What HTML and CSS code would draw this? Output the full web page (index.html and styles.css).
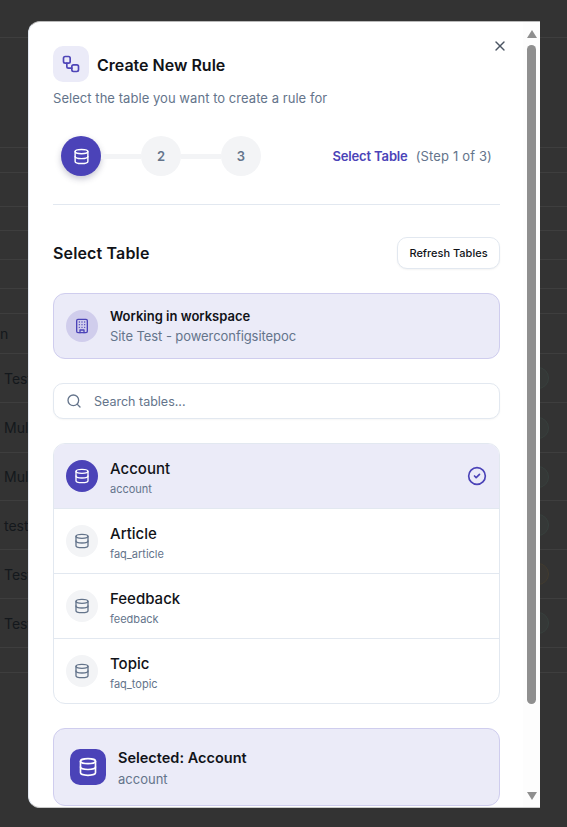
FILE: index.html
```html
<!DOCTYPE html>
<html>

<head>
    <meta charset="utf-8">
    <title>Create New Rule</title>
    <link rel="stylesheet" href="styles.css">
</head>

<body>
    <svg class="defs" width="0" height="0">
        <symbol id="db" viewBox="0 0 24 24">
            <ellipse cx="12" cy="5" rx="9" ry="3"></ellipse>
            <path d="M3 5V19A9 3 0 0 0 21 19V5"></path>
            <path d="M3 12A9 3 0 0 0 21 12"></path>
        </symbol>
    </svg>

    <!-- dimmed page behind the dialog -->
    <div class="backdrop">
        <div class="bg-row"></div>
        <div class="bg-row"></div>
        <div class="bg-row"></div>
        <div class="bg-row"></div>
        <div class="bg-row"></div>
        <div class="bg-row"></div>
        <div class="bg-row"></div>
        <div class="bg-row"></div>
        <div class="bg-row"><span class="bg-head">n</span></div>
        <div class="bg-row"><span>Test</span><i class="dot"></i></div>
        <div class="bg-row"><span>Multi</span><i class="dot"></i></div>
        <div class="bg-row"><span>Multi</span><i class="dot"></i></div>
        <div class="bg-row"><span>test</span><i class="dot"></i></div>
        <div class="bg-row"><span>Test</span><i class="dot amber"></i></div>
        <div class="bg-row"><span>Test</span><i class="dot"></i></div>
        <div class="bg-row"></div>
    </div>

    <div class="modal">
        <div class="modal-body">
            <button class="close">
                <svg viewBox="0 0 24 24" class="ico">
                    <path d="M18 6 6 18"></path>
                    <path d="m6 6 12 12"></path>
                </svg>
            </button>

            <div class="title-row">
                <div class="title-icon">
                    <svg viewBox="0 0 24 24" class="ico">
                        <rect width="8" height="8" x="3" y="3" rx="2"></rect>
                        <path d="M7 11v4a2 2 0 0 0 2 2h4"></path>
                        <rect width="8" height="8" x="13" y="13" rx="2"></rect>
                    </svg>
                </div>
                <h1>Create New Rule</h1>
            </div>
            <p class="subtitle">Select the table you want to create a rule for</p>

            <div class="stepper">
                <div class="steps">
                    <div class="step active"><svg class="ico"><use href="#db"></use></svg></div>
                    <div class="link"></div>
                    <div class="step">2</div>
                    <div class="link"></div>
                    <div class="step">3</div>
                </div>
                <div class="step-label"><b>Select Table</b><span>(Step 1 of 3)</span></div>
            </div>

            <div class="section-head">
                <h2>Select Table</h2>
                <button class="refresh">Refresh Tables</button>
            </div>

            <div class="workspace">
                <div class="circle soft">
                    <svg viewBox="0 0 24 24" class="ico">
                        <rect width="16" height="20" x="4" y="2" rx="2"></rect>
                        <path d="M9 22v-4h6v4"></path>
                        <path d="M8 6h.01M12 6h.01M16 6h.01M8 10h.01M12 10h.01M16 10h.01M8 14h.01M12 14h.01M16 14h.01"></path>
                    </svg>
                </div>
                <div>
                    <div class="ws-title">Working in workspace</div>
                    <div class="ws-sub">Site Test - powerconfigsitepoc</div>
                </div>
            </div>

            <div class="search">
                <svg viewBox="0 0 24 24" class="ico">
                    <circle cx="11" cy="11" r="8"></circle>
                    <path d="m21 21-4.3-4.3"></path>
                </svg>
                <span>Search tables...</span>
            </div>

            <div class="tables">
                <div class="table-row selected">
                    <div class="circle"><svg class="ico"><use href="#db"></use></svg></div>
                    <div class="table-text">
                        <div class="table-name">Account</div>
                        <div class="table-key">account</div>
                    </div>
                    <svg viewBox="0 0 24 24" class="ico check">
                        <circle cx="12" cy="12" r="10"></circle>
                        <path d="m9 12 2 2 4-4"></path>
                    </svg>
                </div>
                <div class="table-row">
                    <div class="circle"><svg class="ico"><use href="#db"></use></svg></div>
                    <div class="table-text">
                        <div class="table-name">Article</div>
                        <div class="table-key">faq_article</div>
                    </div>
                </div>
                <div class="table-row">
                    <div class="circle"><svg class="ico"><use href="#db"></use></svg></div>
                    <div class="table-text">
                        <div class="table-name">Feedback</div>
                        <div class="table-key">feedback</div>
                    </div>
                </div>
                <div class="table-row">
                    <div class="circle"><svg class="ico"><use href="#db"></use></svg></div>
                    <div class="table-text">
                        <div class="table-name">Topic</div>
                        <div class="table-key">faq_topic</div>
                    </div>
                </div>
            </div>

            <div class="selected-card">
                <div class="selected-icon"><svg class="ico"><use href="#db"></use></svg></div>
                <div>
                    <div class="selected-title">Selected: Account</div>
                    <div class="selected-key">account</div>
                </div>
            </div>
        </div>

        <div class="scrollbar">
            <div class="arrow up"></div>
            <div class="thumb"></div>
            <div class="arrow down"></div>
        </div>
    </div>
</body>

</html>
```

FILE: styles.css
```css
* {
    box-sizing: border-box;
}

html,
body {
    margin: 0;
    height: 827px;
    overflow: hidden;
    background: #333333;
    font-family: Inter, "Liberation Sans", sans-serif;
    color: #111318;
}

.defs {
    position: absolute;
}

.ico {
    fill: none;
    stroke: currentColor;
    stroke-width: 2;
    stroke-linecap: round;
    stroke-linejoin: round;
    display: block;
}

/* page behind the dialog */
.backdrop {
    display: grid;
    grid-template-rows: 38px 110px 25px 34px 24px 29px 29px 25px 40px 49px 50px 48px 49px 49px 49px 25px;
}

.bg-row {
    display: flex;
    align-items: center;
    justify-content: space-between;
    padding: 0 18px 0 4px;
    border-bottom: 1px solid #3e3e3e;
    font-size: 14px;
    color: #14181c;
}

.bg-head {
    margin-left: -4px;
}

.dot {
    width: 22px;
    height: 22px;
    border-radius: 50%;
    background: #353837;
    border: 1px solid #37403d;
}

.dot.amber {
    background: #383633;
    border-color: #423b2f;
}

/* dialog */
.modal {
    position: absolute;
    left: 28px;
    top: 21px;
    width: 512px;
    height: 787px;
    display: flex;
    background: #fff;
    border-radius: 12px 0 0 12px;
    border: 1px solid #e2e8f0;
    border-right: 0;
    border-top-color: #b9b9b9;
    border-bottom-color: #c9c9c9;
    overflow: hidden;
}

.modal-body {
    position: relative;
    flex: 1;
    padding: 24px 23px 0 24px;
    overflow: hidden;
}

.close {
    position: absolute;
    top: 16px;
    right: 15px;
    width: 16px;
    height: 16px;
    padding: 0;
    border: 0;
    background: none;
    color: #4b5563;
}

.title-row {
    display: flex;
    align-items: center;
    gap: 8px;
}

.title-icon {
    width: 36px;
    height: 36px;
    border-radius: 10px;
    background: #ebebf8;
    color: #4f46b8;
    display: flex;
    align-items: center;
    justify-content: center;
}

.title-icon .ico {
    width: 20px;
    height: 20px;
}

h1 {
    margin: 0;
    padding-top: 2px;
    font-size: 16px;
    font-weight: 600;
    line-height: 24px;
}

.subtitle {
    margin: 6px 0 0;
    font-size: 13px;
    line-height: 20px;
    letter-spacing: 0.05px;
    color: #64748b;
}

.stepper {
    display: flex;
    align-items: center;
    justify-content: space-between;
    margin-top: 28px;
    padding: 0 8px 28px;
    border-bottom: 1px solid #e2e8f0;
}

.steps {
    display: flex;
    align-items: center;
}

.step {
    width: 40px;
    height: 40px;
    border-radius: 50%;
    background: #f3f4f6;
    color: #64748b;
    font-size: 13px;
    font-weight: 600;
    display: flex;
    align-items: center;
    justify-content: center;
}

.step.active {
    background: #4b43b8;
    color: #fff;
    box-shadow: 0 3px 6px rgba(40, 40, 80, 0.25);
}

.step .ico {
    width: 17px;
    height: 17px;
}

.link {
    width: 40px;
    height: 5px;
    background: #f3f4f6;
}

.step-label {
    font-size: 13px;
    color: #64748b;
    display: flex;
    gap: 8px;
    letter-spacing: 0.15px;
}

.step-label b {
    font-weight: 600;
    letter-spacing: -0.15px;
    color: #4b43b8;
}

.section-head {
    display: flex;
    align-items: center;
    justify-content: space-between;
    margin-top: 32px;
}

h2 {
    margin: 0;
    font-size: 16px;
    font-weight: 600;
    letter-spacing: 0.15px;
}

.refresh {
    width: 103px;
    height: 32px;
    padding: 0;
    border: 1px solid #e2e8f0;
    border-radius: 10px;
    background: #fff;
    box-shadow: 0 1px 2px rgba(0, 0, 0, 0.05);
    font: 500 11px Inter, sans-serif;
    color: #111318;
}

.workspace {
    display: flex;
    align-items: center;
    gap: 12px;
    height: 66px;
    margin-top: 24px;
    padding: 0 12px;
    background: #ebebf8;
    border: 1px solid #cfcdee;
    border-radius: 12px;
}

.circle {
    width: 32px;
    height: 32px;
    flex: none;
    border-radius: 50%;
    background: #f3f4f6;
    color: #64748b;
    display: flex;
    align-items: center;
    justify-content: center;
}

.circle .ico {
    width: 16px;
    height: 16px;
}

.circle.soft {
    background: #d0cdec;
    color: #4b43b8;
}

.ws-title {
    font-size: 13px;
    font-weight: 600;
    line-height: 20px;
}

.ws-sub {
    font-size: 13px;
    line-height: 20px;
    letter-spacing: -0.07px;
    color: #64748b;
}

.search {
    display: flex;
    align-items: center;
    gap: 12px;
    height: 36px;
    margin-top: 24px;
    padding: 0 12px;
    background: #fff;
    border: 1px solid #e2e8f0;
    border-radius: 10px;
    box-shadow: 0 1px 2px rgba(0, 0, 0, 0.04);
    font-size: 12.5px;
    color: #64748b;
}

.search .ico {
    width: 16px;
    height: 16px;
}

.tables {
    margin-top: 24px;
    border: 1px solid #e2e8f0;
    border-radius: 12px;
    overflow: hidden;
}

.table-row {
    display: flex;
    align-items: center;
    gap: 12px;
    height: 65px;
    padding: 0 12px;
    border-bottom: 1px solid #e2e8f0;
}

.table-row:last-child {
    height: 64px;
    border-bottom: 0;
}

.table-row.selected {
    background: #ebebf8;
}

.selected .circle {
    background: #4b43b8;
    color: #fff;
}

.table-text {
    flex: 1;
    padding-top: 2px;
}

.table-name {
    font-size: 15px;
    font-weight: 500;
    line-height: 24px;
}

.table-key {
    font-size: 11px;
    line-height: 16px;
    color: #64748b;
}

.check {
    width: 20px;
    height: 20px;
    stroke-width: 2;
    color: #4b43b8;
}

.selected-card {
    display: flex;
    align-items: center;
    gap: 12px;
    height: 78px;
    margin-top: 24px;
    padding: 0 16px;
    background: #ebebf8;
    border: 1px solid #cfcdee;
    border-radius: 12px;
}

.selected-icon {
    width: 36px;
    height: 36px;
    border-radius: 10px;
    background: #4b43b8;
    color: #fff;
    display: flex;
    align-items: center;
    justify-content: center;
}

.selected-icon .ico {
    width: 20px;
    height: 20px;
}

.selected-title {
    font-size: 14.5px;
    font-weight: 600;
    line-height: 25px;
}

.selected-key {
    font-size: 13px;
    line-height: 19px;
    color: #64748b;
}

/* fake classic scrollbar */
.scrollbar {
    width: 17px;
    flex: none;
    display: flex;
    flex-direction: column;
    align-items: center;
    background: #fdfdfd;
    padding: 8px 0 7px;
}

.thumb {
    width: 9px;
    height: 659px;
    margin: 7px 0 auto;
    border-radius: 5px;
    background: #8f8f8f;
}

.arrow {
    width: 0;
    height: 0;
    border-left: 5px solid transparent;
    border-right: 5px solid transparent;
}

.arrow.up {
    border-bottom: 8px solid #8f8f8f;
}

.arrow.down {
    border-top: 8px solid #8f8f8f;
}
```
